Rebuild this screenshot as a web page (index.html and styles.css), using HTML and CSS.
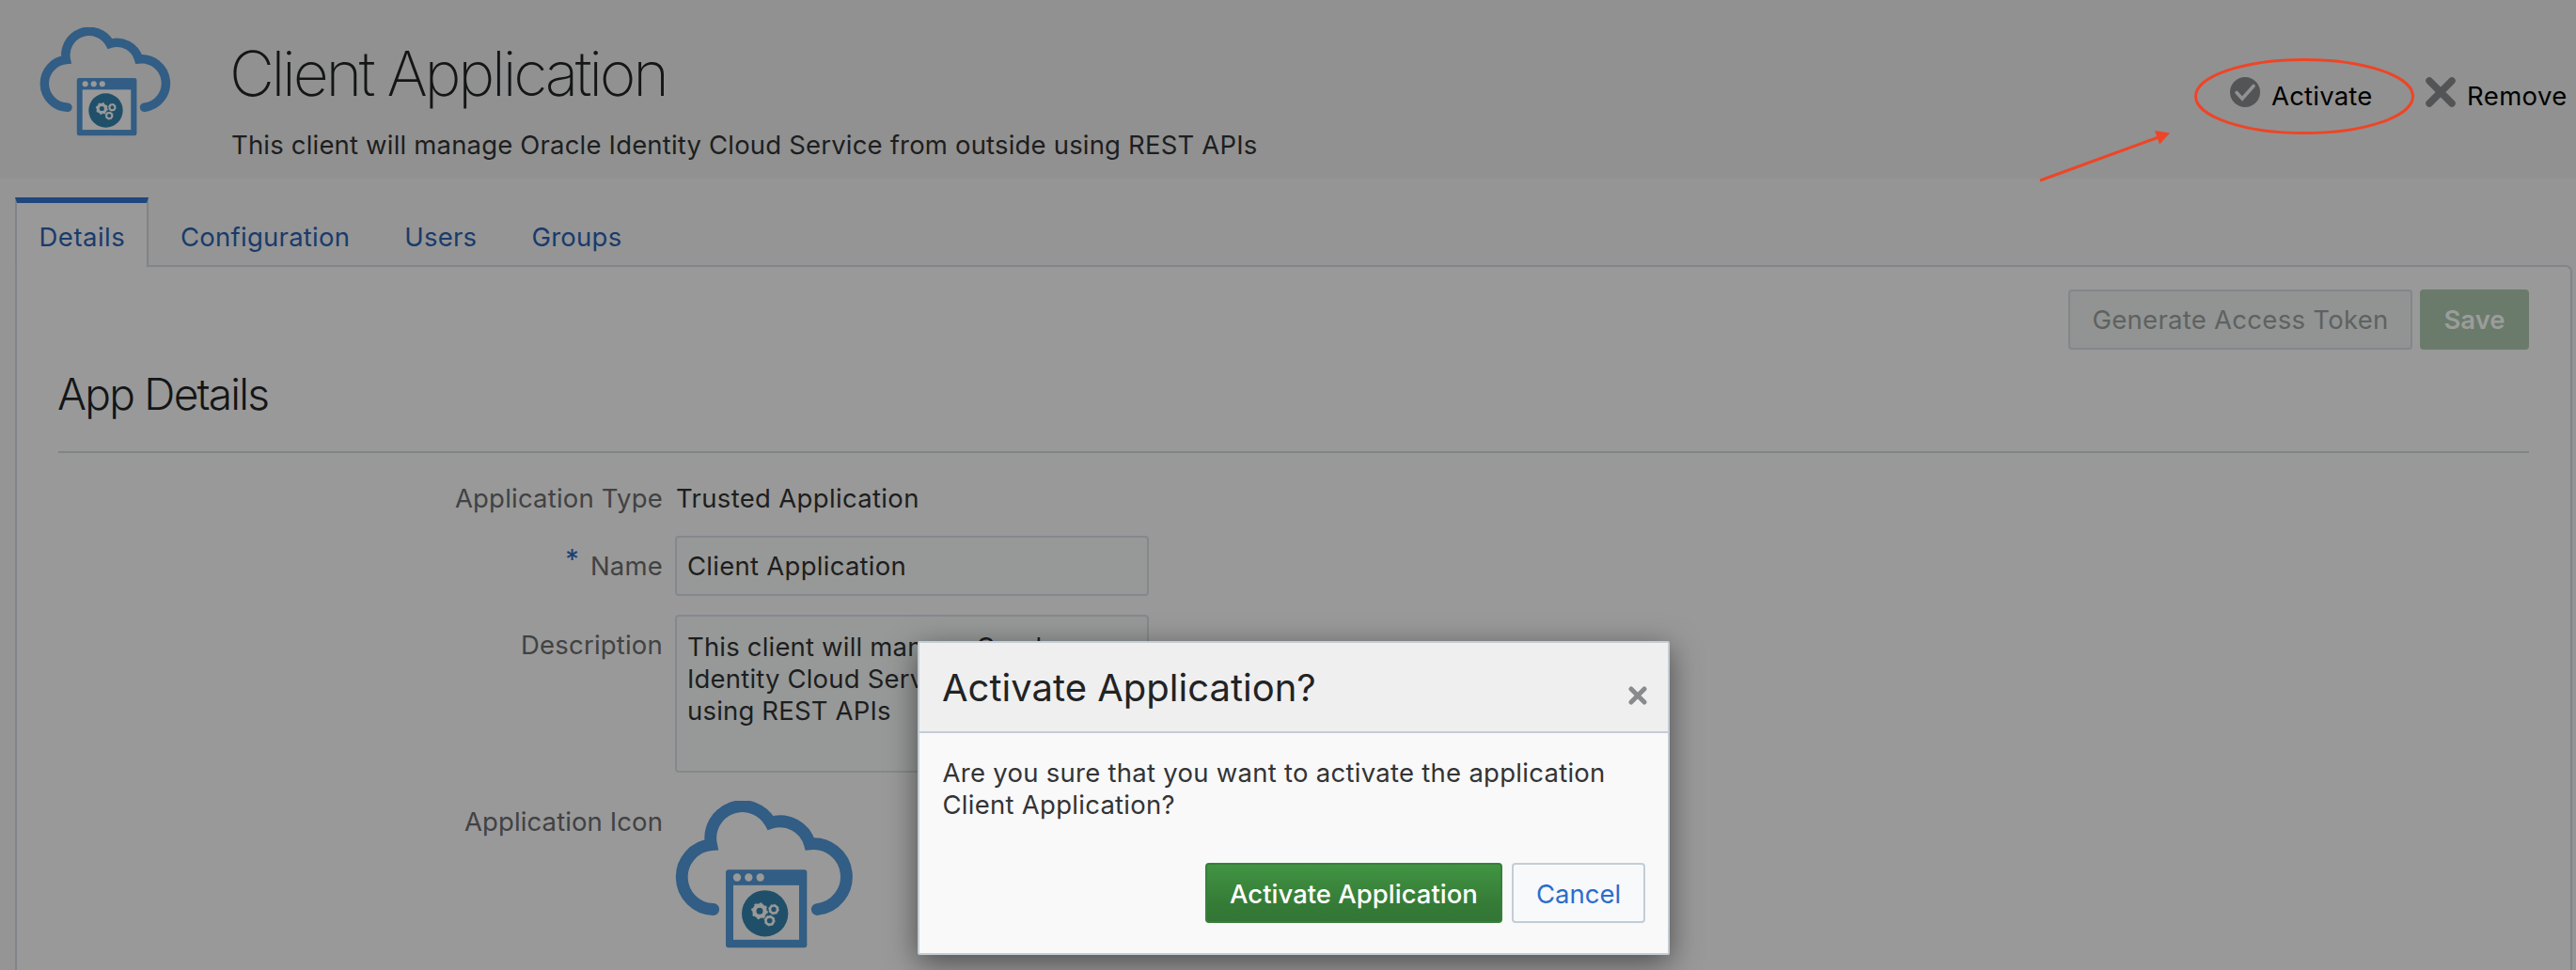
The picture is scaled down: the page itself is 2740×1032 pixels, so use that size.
FILE: index.html
```html
<!DOCTYPE html>
<html lang="en">
<head>
<meta charset="utf-8">
<title>Client Application</title>
<link rel="stylesheet" href="styles.css">
</head>
<body>
<svg class="defs" width="0" height="0" aria-hidden="true">
  <symbol id="cloud-app" viewBox="54 34 570 470">
    <path class="cloud" d="M176 380A103.5 103.5 0 0 1 169.500 173.500A102 102 0 0 1 359 104A98 98 0 0 1 484 171A104.500 104.500 0 1 1 508 380"/>
    <rect class="win" x="216" y="253" width="259" height="249" rx="9"/>
    <rect class="pane" x="240" y="303" width="210" height="174"/>
    <g class="pane"><circle cx="252" cy="278" r="12.500"/><circle cx="289" cy="278" r="12.500"/><circle cx="326" cy="278" r="12.500"/></g>
    <circle class="disc" cx="341" cy="393" r="74"/>
    <g class="gear"><circle cx="324" cy="385" r="17" stroke-width="13"/><circle cx="369" cy="380" r="12" stroke-width="8"/><circle cx="356" cy="416" r="12.500" stroke-width="8"/></g>
    <g class="teeth"><circle cx="324" cy="385" r="24" stroke-width="5" stroke-dasharray="8 10.850"/><circle cx="369" cy="380" r="16" stroke-width="3" stroke-dasharray="5 7.570"/><circle cx="356" cy="416" r="16.500" stroke-width="3" stroke-dasharray="5 7.960"/></g>
  </symbol>
</svg>

<header class="header">
  <svg class="header-icon"><use href="#cloud-app"/></svg>
  <div class="heading">
    <h1>Client Application</h1>
    <p>This client will manage Oracle Identity Cloud Service from outside using REST APIs</p>
  </div>
  <nav class="actions">
    <a class="action">
      <svg viewBox="0 0 32 32"><circle cx="16" cy="16" r="16" fill="#525456"/><path d="M7 16.500l6 6.500L25 9.500" fill="none" stroke="#919191" stroke-width="3.600" stroke-linecap="round"/></svg>
      <span>Activate</span>
    </a>
    <a class="action">
      <svg viewBox="0 0 32 32"><path d="M4 4l24 24M28 4L4 28" stroke="#525456" stroke-width="7.500" stroke-linecap="round"/></svg>
      <span>Remove</span>
    </a>
  </nav>
</header>

<main class="main">
  <div class="tabs">
    <a class="tab active">Details</a>
    <a class="tab">Configuration</a>
    <a class="tab">Users</a>
    <a class="tab">Groups</a>
  </div>
  <section class="panel">
    <div class="toolbar">
      <button class="btn token">Generate Access Token</button>
      <button class="btn save">Save</button>
    </div>
    <h2>App Details</h2>
    <div class="form">
      <label>Application Type</label>
      <div class="value">Trusted Application</div>
      <label class="boxed"><span class="required">*</span>Name</label>
      <div class="field name">Client Application</div>
      <label class="boxed">Description</label>
      <div class="field desc">This client will manage Oracle
Identity Cloud Service from outside
using REST APIs</div>
      <label class="icon-label">Application Icon</label>
      <svg class="app-icon"><use href="#cloud-app"/></svg>
    </div>
  </section>
</main>

<svg class="callout" viewBox="0 0 410 150">
  <ellipse cx="291" cy="52.500" rx="115.500" ry="39" fill="none" stroke="#ee4526" stroke-width="3"/>
  <path d="M10 142L136 96" stroke="#ee4526" stroke-width="3"/>
  <path d="M132 89L148 91.500L137 103.500z" fill="#ee4526"/>
</svg>

<div class="dialog">
  <div class="dialog-head">
    <h3>Activate Application?</h3>
    <svg class="close" viewBox="0 0 20 20"><path d="M3 3l14 14M17 3L3 17" stroke="#888b8d" stroke-width="5" stroke-linecap="round"/></svg>
  </div>
  <div class="dialog-body">
    <p>Are you sure that you want to activate the application<br>Client Application?</p>
    <div class="dialog-actions">
      <button class="btn confirm">Activate Application</button>
      <button class="btn cancel">Cancel</button>
    </div>
  </div>
</div>
</body>
</html>
```
FILE: styles.css
```css
* { box-sizing: border-box; }

body {
  margin: 0;
  width: 2740px;
  height: 1032px;
  overflow: hidden;
  position: relative;
  background: #959595;
  color: #1d1e20;
  font: 400 27.5px/34px Inter, "Liberation Sans", sans-serif;
  letter-spacing: .3px;
}

h1, h2, h3, p { margin: 0; }
.defs { position: absolute; }

.cloud { fill: none; stroke: #325d84; stroke-width: 38.5; stroke-linecap: round; stroke-linejoin: miter; }
.win { fill: #325d84; }
.pane { fill: #999; }
.disc { fill: #205069; }
.gear, .teeth { fill: none; stroke: #999; }

/* Page header */
.header {
  display: grid;
  grid-template-columns: 42px 204px 1fr 368px;
  height: 190px;
  background: #919191;
}
.header-icon { grid-column: 2; width: 140px; height: 116px; margin-top: 28.5px; }
.heading { padding-top: 38px; white-space: nowrap; }
.heading h1 {
  margin-left: -2px;
  font-size: 66px;
  font-weight: 200;
  line-height: 80px;
  letter-spacing: -3.28px;
  color: #141516;
}
.heading p { margin-top: 19px; letter-spacing: .18px; }
.actions { display: flex; padding-top: 82px; color: #000; letter-spacing: .2px; }
.action { display: flex; width: 208px; gap: 12px; }
.action svg { width: 32px; height: 32px; flex: none; }
.action span { margin-top: 3px; }
.action + .action { width: 160px; gap: 12px; letter-spacing: .4px; }

/* Tabs */
.main { display: flex; flex-direction: column; height: 842px; padding: 20px 4px 0 16px; }
.tabs { display: flex; gap: 58px; height: 74px; color: #193b6c; letter-spacing: .25px; }
.tab { padding-top: 25px; }
.tab.active {
  position: relative;
  width: 142px;
  margin-right: -24px;
  padding: 19px 0 0 23.5px;
  border: 2px solid #808387;
  border-top: 6px solid #1f477d;
  border-bottom: 0;
  background: #999;
  z-index: 1;
  letter-spacing: .5px;
}

.panel {
  flex: 1;
  margin-top: -2px;
  padding: 24px 44px 0;
  border: 2px solid #818589;
  border-bottom: 0;
  border-radius: 0 7px 0 0;
  background: #999;
}

.btn {
  height: 64px;
  padding: 0;
  border: 2px solid;
  border-radius: 4px;
  font: inherit;
  letter-spacing: 0;
}
.toolbar { display: flex; justify-content: flex-end; gap: 8px; }
.token { width: 366px; background: #919492; border-color: #83878b; color: #5f6161; letter-spacing: .28px; }
.save { width: 116px; background: #6a7b6b; border-color: #6a7b6b; color: #9b9d9b; font-weight: 600; }

.panel h2 {
  margin-top: 19px;
  margin-left: 0;
  padding-bottom: 33px;
  border-bottom: 2px solid #808487;
  font-size: 46px;
  font-weight: 300;
  line-height: 56px;
  letter-spacing: -1.75px;
  text-indent: -1px;
  color: #141516;
}

/* Details form */
.form {
  display: grid;
  grid-template-columns: 643px 504px;
  grid-template-rows: 57px 84px 198px auto;
  column-gap: 13px;
  padding-top: 31px;
  align-items: start;
}
label { text-align: right; color: #414243; letter-spacing: .2px; }
.boxed { padding-top: 15px; }
.icon-label { padding-top: 5px; letter-spacing: .1px; }
.required { display: inline-block; color: #193f74; margin-right: 12px; position: relative; top: -7px; font-size: 29px; line-height: 20px; }
.value { padding-left: 1px; letter-spacing: .33px; }
.field {
  padding: 13px 11px;
  border: 2px solid #85888c;
  border-radius: 4px;
  background: #979998;
  white-space: pre;
  letter-spacing: .27px;
}
.name { height: 64px; }
.desc { height: 168px; padding-top: 15px; letter-spacing: .18px; }
.app-icon { width: 190px; height: 157px; }

/* Marker over the Activate action */
.callout { position: absolute; left: 2160px; top: 50px; width: 410px; height: 150px; }

/* Confirmation dialog */
.dialog {
  position: absolute;
  left: 976px;
  top: 682px;
  width: 800px;
  height: 334px;
  border: 2px solid #c3cdd6;
  border-radius: 2px;
  background: #f9f9f9;
  box-shadow: 0 8px 32px rgba(0, 0, 0, .5);
  color: #333435;
}
.dialog-head {
  display: flex;
  justify-content: space-between;
  height: 96px;
  padding: 22px 22px 0 24px;
  border-bottom: 2px solid #c3cdd6;
  background: #efefef;
}
.dialog h3 { font-size: 40px; font-weight: 400; line-height: 52px; letter-spacing: 0; color: #222324; }
.close { width: 20px; height: 20px; margin-top: 24px; }
.dialog-body { padding: 25px 24px 0 24.5px; letter-spacing: .27px; }
.dialog-actions { display: flex; justify-content: flex-end; gap: 10px; margin-top: 45px; }
.dialog .btn { padding-top: 2px; }
.confirm {
  width: 316px;
  border-color: #37803a;
  background: linear-gradient(#419443, #357b37 70%, #337536);
  color: #fff;
  font-weight: 500;
}
.cancel { width: 142px; border-color: #c3cdd6; background: #f7f9fb; color: #2b6dcb; }
```
